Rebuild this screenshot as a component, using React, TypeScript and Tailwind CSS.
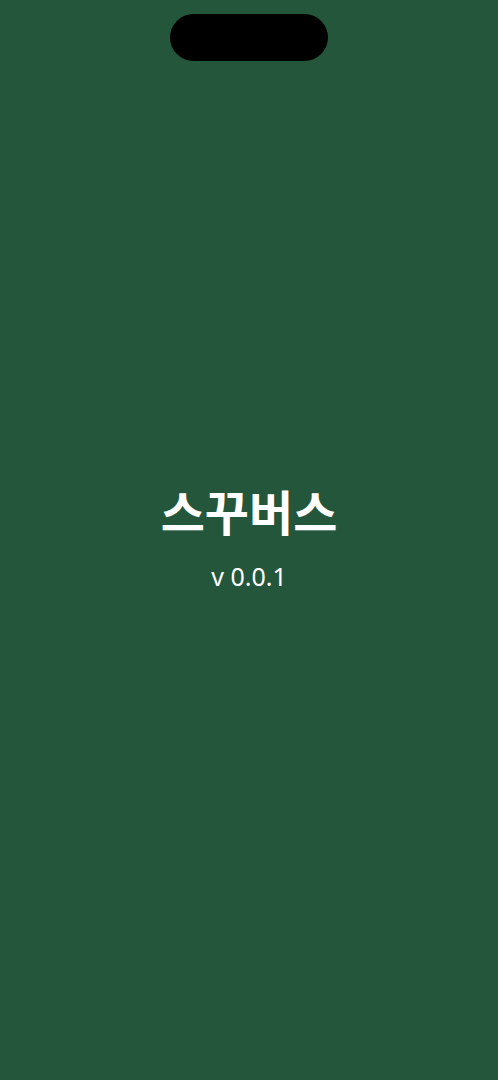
export default function App() {
  return (
    <div className="relative w-full h-[1080px] pb-[5px] bg-[#24563b] flex flex-col items-center justify-center font-['Noto_Sans','Noto_Sans_CJK_KR',sans-serif] text-white">
      {/* dynamic island */}
      <div className="absolute top-[14px] left-1/2 -translate-x-1/2 w-[158px] h-[47px] rounded-full bg-black" />
      <h1 className="text-[48px] leading-[56px] font-semibold">스꾸버스</h1>
      <p className="mt-[20px] text-[25px] leading-[30px]">v 0.0.1</p>
    </div>
  )
}
